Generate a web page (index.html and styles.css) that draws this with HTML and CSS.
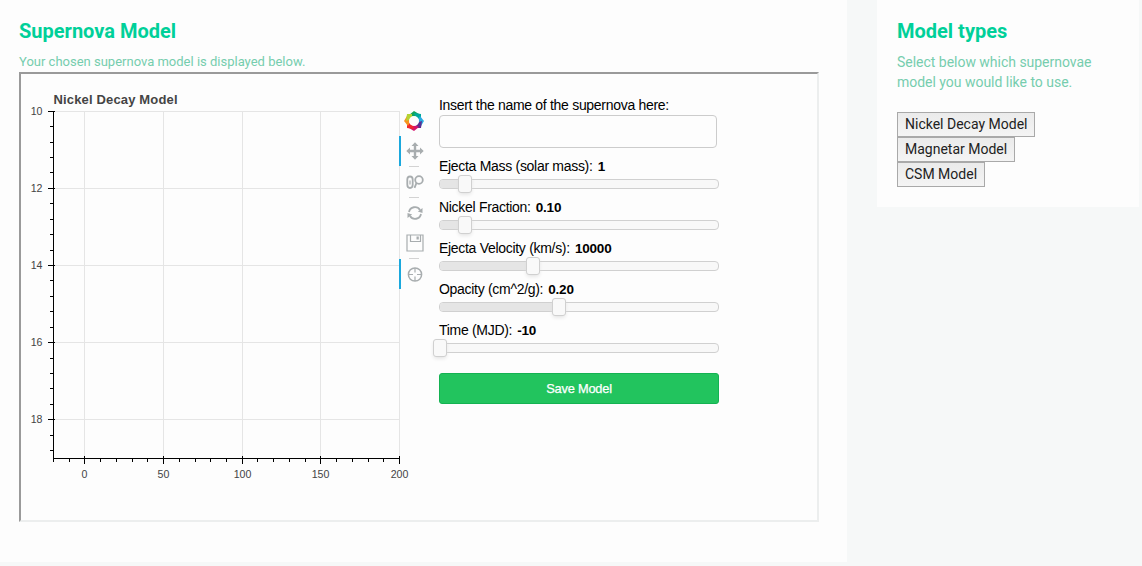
FILE: index.html
```
<!DOCTYPE html>
<html lang="en">
<head>
<meta charset="utf-8">
<title>Supernova Model</title>
<link rel="stylesheet" href="styles.css">
</head>
<body>
<div class="page">
  <main class="card main-card">
    <h2 class="heading">Supernova Model</h2>
    <p class="lead">Your chosen supernova model is displayed below.</p>
    <div class="frame">
      <svg class="plot" viewBox="21 74 378 445" width="378" height="445">
        <text class="plot-title" x="53.5" y="104" textLength="124">Nickel Decay Model</text>
        <path class="grid" d="M84.5 111V458M163.5 111V458M242.5 111V458M320.5 111V458M399.5 111V458M54 111.5H399M54 188.5H399M54 265.5H399M54 342.5H399M54 419.5H399"/>
        <path class="axis" d="M53.5 111V459M53 458.5H400M48 111.5H55M48 188.5H55M48 265.5H55M48 342.5H55M48 419.5H55M84.5 456V464M163.5 456V464M242.5 456V464M320.5 456V464M399.5 456V464"/>
        <path class="axis" d="M50 126.5h4M50 142.5h4M50 157.5h4M50 172.5h4M50 203.5h4M50 219.5h4M50 234.5h4M50 250.5h4M50 280.5h4M50 296.5h4M50 311.5h4M50 327.5h4M50 358.5h4M50 373.5h4M50 388.5h4M50 404.5h4M50 435.5h4M50 450.5h4"/>
        <path class="axis" d="M53.5 458v4M69.5 458v4M100.5 458v4M116.5 458v4M132.5 458v4M147.5 458v4M179.5 458v4M195.5 458v4M210.5 458v4M226.5 458v4M257.5 458v4M273.5 458v4M289.5 458v4M305.5 458v4M336.5 458v4M352.5 458v4M368.5 458v4M383.5 458v4"/>
        <g class="ticks" text-anchor="end">
          <text x="42.500" y="115">10</text><text x="42.500" y="192">12</text><text x="42.500" y="269">14</text><text x="42.500" y="346">16</text><text x="42.500" y="423">18</text>
        </g>
        <g class="ticks" text-anchor="middle">
          <text x="84.500" y="478">0</text><text x="163.500" y="478">50</text><text x="242.500" y="478">100</text><text x="320.500" y="478">150</text><text x="399.500" y="478">200</text>
        </g>
      </svg>
      <div class="toolbar">
        <svg class="logo" viewBox="-10 -10 20 20" width="20" height="20">
          <path fill="#12a45a" d="M-5-6L0-10 5-7 2-4.500-2-4.500z"/>
          <path fill="#00a99d" d="M0-8L7-7 7-2 4.500-2 1-5z"/>
          <path fill="#29abe2" d="M6-5L10 0 7 5 4.500 2 4.500-2z"/>
          <path fill="#5c2d91" d="M8 0L7 7 2 7 2 4.500 5 1z"/>
          <path fill="#d4146e" d="M5 6L0 10-5 7-2 4.500 2 4.500z"/>
          <path fill="#f0282d" d="M0 8L-7 7-7 2-4.500 2-1 5z"/>
          <path fill="#f7931e" d="M-6 5L-10 0-7-5-4.500-2-4.500 2z"/>
          <path fill="#b5d334" d="M-8 0L-7-7-2-7-2-4.500-5-1z"/>
          <circle class="hub" r="5"/>
        </svg>
        <div class="tool active">
          <svg viewBox="0 0 18 18" width="18" height="18"><path class="solid" d="M9 .3L12.500 4H10.200V7.800H14V5.500L17.700 9 14 12.500V10.200H10.200V14H12.500L9 17.700 5.500 14H7.800V10.200H4V12.500L.3 9 4 5.500V7.800H7.800V4H5.500z"/></svg>
        </div>
        <div class="sep"></div>
        <div class="tool">
          <svg viewBox="0 0 18 18" width="18" height="18"><path class="line" d="M4 3.500C1.800 3.500 1.300 5 1.300 6.500V11.500C1.300 14 2 15 4 15S6.700 14 6.700 11.500V6.500C6.700 5 6.200 3.500 4 3.500z"/><path class="line thin" d="M4 7.500V11.500"/><circle class="line" cx="13" cy="7" r="3.800"/><path class="line" d="M10.500 9.800L8.500 14.800"/></svg>
        </div>
        <div class="sep"></div>
        <div class="tool">
          <svg viewBox="0 0 18 18" width="18" height="18"><path class="line" d="M3 8A6 6 0 0 1 14 6M15 10A6 6 0 0 1 4 12"/><path class="solid" d="M16.500 4V9L11.800 7.500zM1.500 14V9L6.200 10.500z"/></svg>
        </div>
        <div class="tool">
          <svg viewBox="0 0 18 18" width="18" height="18"><path class="line thin" d="M1 1H17V17H1zM4.500 1V7.500H14.500V1"/><path class="solid" d="M10.500 2.500H12.800V5.500H10.500z"/></svg>
        </div>
        <div class="sep"></div>
        <div class="tool active">
          <svg viewBox="0 0 18 18" width="18" height="18"><circle class="line ring" cx="9" cy="9.500" r="6.600"/><path class="line thin" d="M9 3V7.500M9 11.500V16M2.500 9.500H7M11 9.500H15.500"/></svg>
        </div>
      </div>
      <form class="form">
        <label class="label name-label" for="name">Insert the name of the supernova here:</label>
        <input class="name" id="name" type="text">
        <div class="control"><div class="label">Ejecta Mass (solar mass): <b>1</b></div><div class="track"><div class="range" style="width:26px"><i class="handle"></i></div></div></div>
        <div class="control"><div class="label">Nickel Fraction: <b>0.10</b></div><div class="track"><div class="range" style="width:26px"><i class="handle"></i></div></div></div>
        <div class="control"><div class="label">Ejecta Velocity (km/s): <b>10000</b></div><div class="track"><div class="range" style="width:94px"><i class="handle"></i></div></div></div>
        <div class="control"><div class="label">Opacity (cm^2/g): <b>0.20</b></div><div class="track"><div class="range" style="width:120px"><i class="handle"></i></div></div></div>
        <div class="control"><div class="label">Time (MJD): <b>-10</b></div><div class="track"><div class="range" style="width:1px"><i class="handle"></i></div></div></div>
        <button class="save" type="button">Save Model</button>
      </form>
    </div>
  </main>
  <aside class="card side-card">
    <h2 class="heading">Model types</h2>
    <p class="lead side-lead">Select below which supernovae model you would like to use.</p>
    <div class="models">
      <button class="model" type="button">Nickel Decay Model</button>
      <button class="model" type="button">Magnetar Model</button>
      <button class="model" type="button">CSM Model</button>
    </div>
  </aside>
</div>
</body>
</html>
```
FILE: styles.css
```
* { box-sizing: border-box; }
body { margin: 0; background: #f6f8f8; font-family: Roboto, sans-serif; overflow: hidden; }
.page { display: flex; align-items: flex-start; gap: 30px; }
.card { background: #fdfdfd; }
.main-card { width: 847px; height: 562px; padding: 19px; }
.side-card { width: 262px; height: 207px; padding: 19px 20px; }
.heading { margin: 0; font-size: 20px; line-height: 24px; font-weight: 700; color: #00d099; }
.lead { margin: 9px 0 0; font-size: 13px; line-height: 20px; color: #76cdae; }
.side-lead { font-size: 14px; letter-spacing: -0.02px; }
.frame { display: flex; width: 800px; height: 450px; border: 2px solid; border-color: #9a9a9a #eceeee #eceeee #9a9a9a; font-family: "Liberation Sans", sans-serif; }
.plot { flex: none; overflow: visible; }
.plot-title { font-size: 13px; font-weight: 700; fill: #444; }
.grid { stroke: #e5e5e5; fill: none; }
.axis { stroke: #000; fill: none; }
.ticks { font-size: 10.6px; fill: #444; }
.toolbar { flex: none; width: 30px; padding-top: 37px; display: flex; flex-direction: column; }
.logo { margin: 0 0 5px 5px; flex: none; }
.hub { fill: #fdfdfd; }
.tool { height: 30px; padding: 6px 0 0 5px; border-left: 2px solid transparent; }
.tool.active { border-left-color: #1ba8dd; }
.tool svg { display: block; }
.sep { height: 1px; width: 10px; margin-left: 10px; background: #d3d3d3; }
.solid { fill: #a8adaf; }
.line { fill: none; stroke: #a8adaf; stroke-width: 1.8; }
.ring { stroke-width: 1.5; }
.thin { stroke-width: 1.2; }
.form { width: 280px; margin-left: 10px; padding-top: 22px; font-size: 14px; color: #000; }
.label { display: block; line-height: 18px; height: 18px; white-space: nowrap; letter-spacing: -0.3px; }
.label b { margin-left: 1.5px; font-size: 13.5px; letter-spacing: -0.2px; }
.name { display: block; width: 278px; height: 33px; margin: 1px 0 9px; border: 1px solid #ccc; border-radius: 4px; background: #fdfdfd; }
.control { height: 41px; }
.track { height: 10px; margin-top: 4px; border: 1px solid #d0d0d0; border-radius: 4px; background: #f8f8f8; }
.range { position: relative; height: 8px; background: #e5e5e5; border-radius: 3px 0 0 3px; }
.handle { position: absolute; right: -6px; top: -5px; width: 14px; height: 18px; border: 1px solid #d0d0d0; border-radius: 3px; background: #f9f9f9; box-shadow: 0 2px 4px -1px #ddd; }
.save { display: block; width: 280px; height: 31px; margin-top: 11px; padding: 0; border: 1px solid #14b252; border-radius: 3px; background: #22c45e; color: #fff; font: 12.8px "Liberation Sans", sans-serif; letter-spacing: -0.2px; -webkit-text-stroke: 0.25px #fff; }
.models { display: flex; flex-direction: column; align-items: flex-start; margin-top: 20px; }
.model { height: 25px; padding: 0 7px 2px; border: 1px solid #a9a9a9; border-radius: 0; background: linear-gradient(#ebebeb, #f4f4f4); color: #222; font: 14px Roboto, sans-serif; }
```
